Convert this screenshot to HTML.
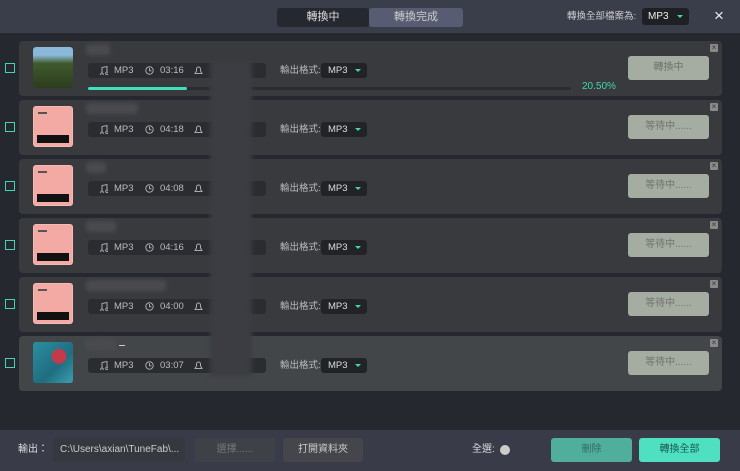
<!DOCTYPE html>
<html><head><meta charset="utf-8"><style>
*{margin:0;padding:0;box-sizing:border-box}
body{width:740px;height:471px;background:#26282f;font-family:"Liberation Sans","Noto Sans CJK TC",sans-serif;position:relative;overflow:hidden;color:#ccc}
.hdr{position:absolute;left:0;top:0;width:740px;height:33px;background:#3a3d4a}
.tab{position:absolute;top:8px;height:19px;font-size:11px;line-height:19px;text-align:center;border-radius:3px}
.row{position:absolute;left:19px;width:703px;height:55px;background:#393a3d;border-radius:4px}
.cb{position:absolute;left:5px;width:10px;height:10px;border:1.5px solid #3fd6b3}
.th{position:absolute;left:14px;top:6px;width:40px;height:41px;border-radius:3px;overflow:hidden}
.pink{background:#f3a9a4;border:1px solid #fff3}
.pink:after{content:"";position:absolute;left:3px;right:3px;bottom:3px;height:8px;background:#111}
.pink:before{content:"";position:absolute;left:4px;top:5px;width:9px;height:2px;background:#555}
.tt{position:absolute;left:67px;top:3px;height:11px;background:#4a4b4f;border-radius:3px;filter:blur(2px)}
.info{position:absolute;left:69px;top:22px;width:178px;height:15px;background:#2b2c31;border-radius:3px;font-size:9.5px;color:#bbb;line-height:15px}
.info span{position:absolute}
.lab{position:absolute;left:261px;top:22px;font-size:9.5px;color:#bbb;line-height:15px;height:15px}
.sel{position:absolute;left:302px;top:22px;width:46px;height:15px;background:#222327;border-radius:3px;font-size:9.5px;color:#ddd;line-height:15px;padding-left:7px}
.sel i{position:absolute;right:6px;top:6px;border:3px solid transparent;border-top:3px solid #3fd6b3;border-bottom:0}
.btn{position:absolute;left:609px;top:15px;width:81px;height:24px;background:#a5aca2;border-radius:3px;font-size:10px;color:#6f746e;text-align:center;line-height:24px}
.x{position:absolute;left:691px;top:3px;width:8px;height:8px;background:#8a8a8a;border-radius:1px;color:#333;font-size:8px;line-height:8px;text-align:center}
.ft{position:absolute;left:0;top:430px;width:740px;height:41px;background:#393c48}
.fb{position:absolute;top:8px;height:24px;border-radius:3px;font-size:10px;text-align:center;line-height:24px}
</style></head><body>
<div class="hdr">
<div class="tab" style="left:277px;width:92px;background:#262830;color:#ddd">轉換中</div>
<div class="tab" style="left:369px;width:94px;background:#585c72;color:#ccc">轉換完成</div>
<div style="position:absolute;left:567px;top:9px;font-size:9.5px;color:#ccc;line-height:15px">轉換全部檔案為:</div>
<div style="position:absolute;left:642px;top:8px;width:47px;height:17px;background:#1f2024;border-radius:3px;font-size:10px;color:#eee;line-height:17px;padding-left:6px">MP3<i style="position:absolute;right:6px;top:7px;border:3px solid transparent;border-top:3px solid #3fd6b3;border-bottom:0"></i></div>
<div style="position:absolute;left:714px;top:6px;font-size:17px;color:#eee;line-height:20px">×</div>
</div>

<div class="row" style="top:41px"><div class="cb" style="left:-14px;top:22px"></div>
<div class="th" style="background:linear-gradient(#8ab8d8 0,#8ab8d8 20%,#3f5a2c 40%,#2c3d1e 100%)"></div>
<div class="tt" style="width:24px"></div>
<div class="info"><svg style="position:absolute;left:11px;top:3px" width="9" height="9" viewBox="0 0 9 9"><path d="M3 7V1.5L8 .5V6M3 7a1.3 1.3 0 1 1-.1 0M8 6a1.3 1.3 0 1 1-.1 0" stroke="#aaa" fill="none"/></svg><span style="left:26px">MP3</span><svg style="position:absolute;left:57px;top:3px" width="9" height="9"><circle cx="4.5" cy="4.5" r="3.7" stroke="#aaa" fill="none"/><path d="M4.5 2v2.7h2" stroke="#aaa" fill="none"/></svg><span style="left:72px">03:16</span><svg style="position:absolute;left:106px;top:3px" width="9" height="9"><path d="M1 7.5h7L6.5 5V3A2 2 0 0 0 2.5 3V5z" stroke="#aaa" fill="none"/></svg></div>
<div class="lab">輸出格式:</div><div class="sel">MP3<i></i></div>
<div style="position:absolute;left:69px;top:46px;width:483px;height:3px;background:#2b2c31;border-radius:2px"><div style="width:99px;height:3px;background:#3fe0bb;border-radius:2px"></div></div>
<div style="position:absolute;left:563px;top:40px;font-size:10px;color:#3fd6b3;line-height:12px">20.50%</div>
<div class="btn">轉換中</div><div class="x">×</div></div>

<div class="row" style="top:100px"><div class="cb" style="left:-14px;top:22px"></div><div class="th pink"></div><div class="tt" style="width:52px"></div>
<div class="info"><svg style="position:absolute;left:11px;top:3px" width="9" height="9" viewBox="0 0 9 9"><path d="M3 7V1.5L8 .5V6M3 7a1.3 1.3 0 1 1-.1 0M8 6a1.3 1.3 0 1 1-.1 0" stroke="#aaa" fill="none"/></svg><span style="left:26px">MP3</span><svg style="position:absolute;left:57px;top:3px" width="9" height="9"><circle cx="4.5" cy="4.5" r="3.7" stroke="#aaa" fill="none"/><path d="M4.5 2v2.7h2" stroke="#aaa" fill="none"/></svg><span style="left:72px">04:18</span><svg style="position:absolute;left:106px;top:3px" width="9" height="9"><path d="M1 7.5h7L6.5 5V3A2 2 0 0 0 2.5 3V5z" stroke="#aaa" fill="none"/></svg></div>
<div class="lab">輸出格式:</div><div class="sel">MP3<i></i></div><div class="btn">等待中......</div><div class="x">×</div></div>

<div class="row" style="top:159px"><div class="cb" style="left:-14px;top:22px"></div><div class="th pink"></div><div class="tt" style="width:20px"></div>
<div class="info"><svg style="position:absolute;left:11px;top:3px" width="9" height="9" viewBox="0 0 9 9"><path d="M3 7V1.5L8 .5V6M3 7a1.3 1.3 0 1 1-.1 0M8 6a1.3 1.3 0 1 1-.1 0" stroke="#aaa" fill="none"/></svg><span style="left:26px">MP3</span><svg style="position:absolute;left:57px;top:3px" width="9" height="9"><circle cx="4.5" cy="4.5" r="3.7" stroke="#aaa" fill="none"/><path d="M4.5 2v2.7h2" stroke="#aaa" fill="none"/></svg><span style="left:72px">04:08</span><svg style="position:absolute;left:106px;top:3px" width="9" height="9"><path d="M1 7.5h7L6.5 5V3A2 2 0 0 0 2.5 3V5z" stroke="#aaa" fill="none"/></svg></div>
<div class="lab">輸出格式:</div><div class="sel">MP3<i></i></div><div class="btn">等待中......</div><div class="x">×</div></div>

<div class="row" style="top:218px"><div class="cb" style="left:-14px;top:22px"></div><div class="th pink"></div><div class="tt" style="width:30px"></div>
<div class="info"><svg style="position:absolute;left:11px;top:3px" width="9" height="9" viewBox="0 0 9 9"><path d="M3 7V1.5L8 .5V6M3 7a1.3 1.3 0 1 1-.1 0M8 6a1.3 1.3 0 1 1-.1 0" stroke="#aaa" fill="none"/></svg><span style="left:26px">MP3</span><svg style="position:absolute;left:57px;top:3px" width="9" height="9"><circle cx="4.5" cy="4.5" r="3.7" stroke="#aaa" fill="none"/><path d="M4.5 2v2.7h2" stroke="#aaa" fill="none"/></svg><span style="left:72px">04:16</span><svg style="position:absolute;left:106px;top:3px" width="9" height="9"><path d="M1 7.5h7L6.5 5V3A2 2 0 0 0 2.5 3V5z" stroke="#aaa" fill="none"/></svg></div>
<div class="lab">輸出格式:</div><div class="sel">MP3<i></i></div><div class="btn">等待中......</div><div class="x">×</div></div>

<div class="row" style="top:277px"><div class="cb" style="left:-14px;top:22px"></div><div class="th pink"></div><div class="tt" style="width:80px"></div>
<div class="info"><svg style="position:absolute;left:11px;top:3px" width="9" height="9" viewBox="0 0 9 9"><path d="M3 7V1.5L8 .5V6M3 7a1.3 1.3 0 1 1-.1 0M8 6a1.3 1.3 0 1 1-.1 0" stroke="#aaa" fill="none"/></svg><span style="left:26px">MP3</span><svg style="position:absolute;left:57px;top:3px" width="9" height="9"><circle cx="4.5" cy="4.5" r="3.7" stroke="#aaa" fill="none"/><path d="M4.5 2v2.7h2" stroke="#aaa" fill="none"/></svg><span style="left:72px">04:00</span><svg style="position:absolute;left:106px;top:3px" width="9" height="9"><path d="M1 7.5h7L6.5 5V3A2 2 0 0 0 2.5 3V5z" stroke="#aaa" fill="none"/></svg></div>
<div class="lab">輸出格式:</div><div class="sel">MP3<i></i></div><div class="btn">等待中......</div><div class="x">×</div></div>

<div class="row" style="top:336px;background:#434648"><div class="cb" style="left:-14px;top:22px"></div>
<div class="th" style="background:radial-gradient(circle at 65% 35%,#c43a4a 0,#c43a4a 18%,transparent 22%),linear-gradient(135deg,#2b8fa0,#1f6d80 60%,#3aa0b0)"></div>
<div class="tt" style="width:30px"></div><div style="position:absolute;left:100px;top:9px;width:6px;height:1px;background:#ccc"></div>
<div class="info"><svg style="position:absolute;left:11px;top:3px" width="9" height="9" viewBox="0 0 9 9"><path d="M3 7V1.5L8 .5V6M3 7a1.3 1.3 0 1 1-.1 0M8 6a1.3 1.3 0 1 1-.1 0" stroke="#aaa" fill="none"/></svg><span style="left:26px">MP3</span><svg style="position:absolute;left:57px;top:3px" width="9" height="9"><circle cx="4.5" cy="4.5" r="3.7" stroke="#aaa" fill="none"/><path d="M4.5 2v2.7h2" stroke="#aaa" fill="none"/></svg><span style="left:72px">03:07</span><svg style="position:absolute;left:106px;top:3px" width="9" height="9"><path d="M1 7.5h7L6.5 5V3A2 2 0 0 0 2.5 3V5z" stroke="#aaa" fill="none"/></svg></div>
<div class="lab">輸出格式:</div><div class="sel">MP3<i></i></div><div class="btn">等待中......</div><div class="x">×</div></div>

<div style="position:absolute;left:210px;top:60px;width:42px;height:316px;background:#3b3d42;filter:blur(2px)"></div>

<div class="ft">
<div style="position:absolute;left:18px;top:13px;font-size:10px;color:#ddd;line-height:14px">輸出：</div>
<div class="fb" style="left:53px;width:132px;background:#363840;color:#ccc;text-align:left;padding-left:7px">C:\Users\axian\TuneFab\...</div>
<div class="fb" style="left:195px;width:80px;background:#3f4148;color:#777">選擇......</div>
<div class="fb" style="left:283px;width:80px;background:#44464c;color:#ccc">打開資料夾</div>
<div style="position:absolute;left:472px;top:13px;font-size:10px;color:#ddd;line-height:14px">全選:</div>
<div style="position:absolute;left:500px;top:15px;width:10px;height:10px;border-radius:50%;background:#ccc"></div>
<div class="fb" style="left:551px;width:81px;background:#4fae9c;color:#2f6e62">刪除</div>
<div class="fb" style="left:639px;width:81px;background:#4ee0c0;color:#1d5a50">轉換全部</div>
</div>
</body></html>
